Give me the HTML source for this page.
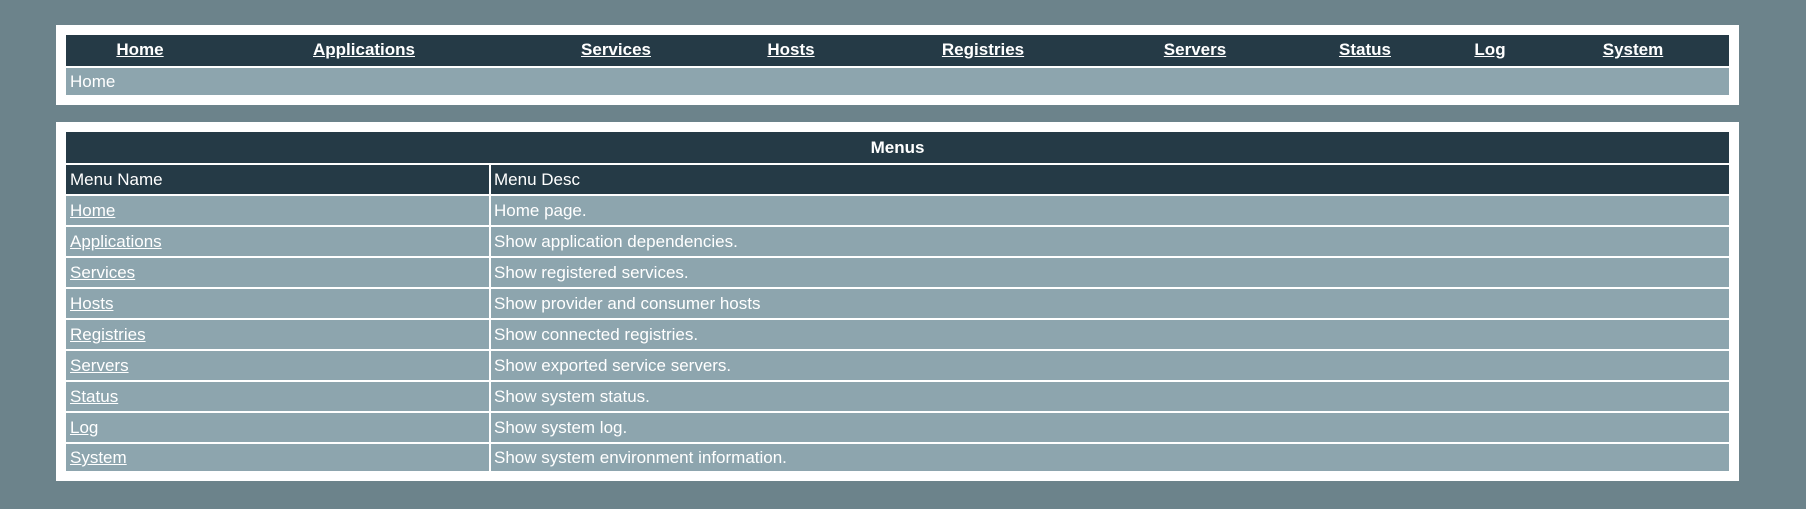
<!DOCTYPE html>
<html><head><style>
body{margin:0;width:1806px;height:509px;background:#6c838b;font-family:"Liberation Sans",sans-serif;color:#fff;position:relative;overflow:hidden;font-size:17px}
.box{position:absolute;left:56px;width:1683px;background:#fff}
.d{background:#253a46}.g{background:#8da5ae}
.r{position:absolute;height:29px;line-height:29px;box-sizing:border-box}
.c1{left:66px;width:423px;padding-left:4px}
.c2{left:491px;width:1238px;padding-left:3px}
a{color:#fff;text-decoration:underline}
.nav a{position:absolute;top:40px;font-weight:bold;transform:translateX(-50%);line-height:20px}
</style></head><body>
<div class="box" style="top:25px;height:80px"></div>
<div class="d" style="position:absolute;left:66px;top:35px;width:1663px;height:31px"></div>
<div class="nav">
<a style="left:140px">Home</a><a style="left:364px">Applications</a><a style="left:616px">Services</a><a style="left:791px">Hosts</a><a style="left:983px">Registries</a><a style="left:1195px">Servers</a><a style="left:1365px">Status</a><a style="left:1490px">Log</a><a style="left:1633px">System</a>
</div>
<div class="g r" style="left:66px;top:68px;width:1663px;height:27px;line-height:27px;padding-left:4px">Home</div>
<div class="box" style="top:122px;height:359px"></div>
<div class="d r" style="left:66px;top:132px;width:1663px;height:31px;line-height:31px;text-align:center;font-weight:bold">Menus</div>
<div class="d r c1" style="top:165px">Menu Name</div>
<div class="d r c2" style="top:165px">Menu Desc</div>
<div class="g r c1" style="top:196px"><a>Home</a></div><div class="g r c2" style="top:196px">Home page.</div>
<div class="g r c1" style="top:227px"><a>Applications</a></div><div class="g r c2" style="top:227px">Show application dependencies.</div>
<div class="g r c1" style="top:258px"><a>Services</a></div><div class="g r c2" style="top:258px">Show registered services.</div>
<div class="g r c1" style="top:289px"><a>Hosts</a></div><div class="g r c2" style="top:289px">Show provider and consumer hosts</div>
<div class="g r c1" style="top:320px"><a>Registries</a></div><div class="g r c2" style="top:320px">Show connected registries.</div>
<div class="g r c1" style="top:351px"><a>Servers</a></div><div class="g r c2" style="top:351px">Show exported service servers.</div>
<div class="g r c1" style="top:382px"><a>Status</a></div><div class="g r c2" style="top:382px">Show system status.</div>
<div class="g r c1" style="top:413px"><a>Log</a></div><div class="g r c2" style="top:413px">Show system log.</div>
<div class="g r c1" style="top:444px;height:27px;line-height:27px"><a>System</a></div><div class="g r c2" style="top:444px;height:27px;line-height:27px">Show system environment information.</div>
</body></html>
